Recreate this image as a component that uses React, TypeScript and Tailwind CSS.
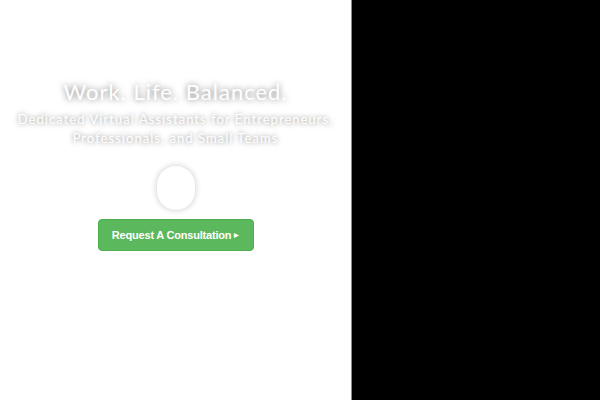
import React from "react";

export default function App() {
  return (
    <div className="flex h-[400px] w-[600px] bg-black">
      <div className="flex h-full w-[352px] flex-col items-center border-r border-[#8a8a8a] bg-white pt-[79px] font-['Lato',sans-serif]">
        <h1 className="text-[22px] leading-[26px] tracking-[1px] text-white [text-shadow:0_0_6px_rgba(0,0,0,0.55)]">
          Work. Life. Balanced.
        </h1>
        <p className="mt-[5px] text-center text-[13px] leading-[19px] tracking-[1.05px] text-white [text-shadow:0_0_5px_rgba(0,0,0,0.5)]">
          Dedicated Virtual Assistants for Entrepreneurs,
          <br />
          Professionals, and Small Teams
        </p>
        <div className="mt-[18px] h-[44px] w-[38px] rounded-full bg-white shadow-[0_0_6px_rgba(0,0,0,0.22)]" />
        <button className="mt-[9px] flex h-[32px] w-[156px] items-center justify-center rounded-[4px] border border-[#4cae4c] bg-[#5cb85c] font-['Liberation_Sans',sans-serif] text-[11px] font-bold tracking-[-0.2px] text-white">
          Request A Consultation
          <span className="ml-[3px] text-[6px]">▶</span>
        </button>
      </div>
      <div className="flex-1" />
    </div>
  );
}
